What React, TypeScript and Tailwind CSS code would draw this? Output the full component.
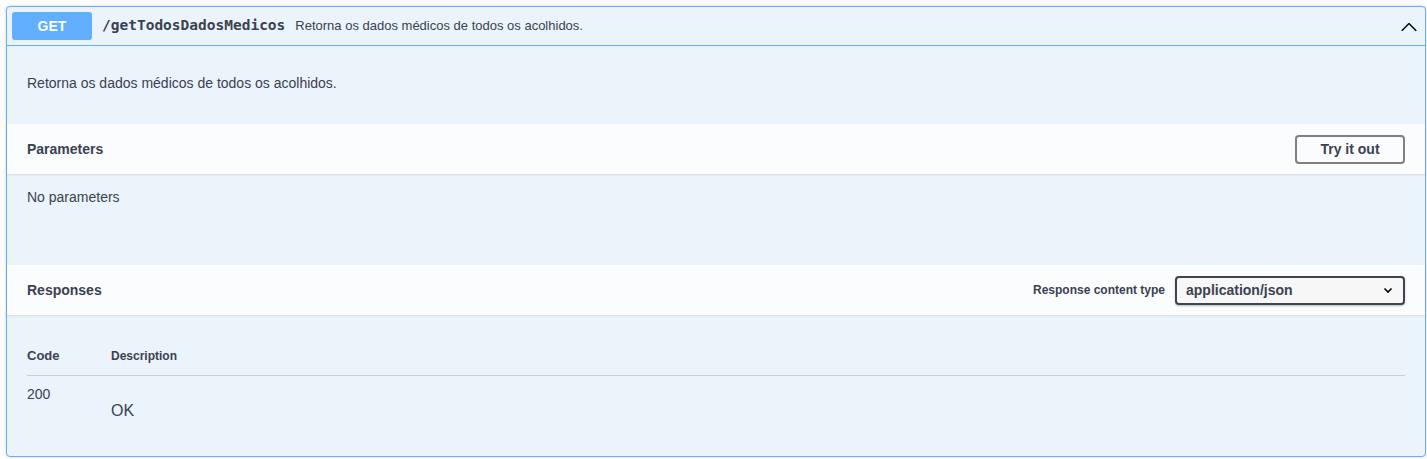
export default function App() {
  return (
    <div className="min-h-screen bg-white pt-[6px] pr-[1px] pb-[2px] pl-[6px] font-['Liberation_Sans',Arial,sans-serif] text-[#3b4151]">
      <div className="rounded-[4px] border border-[#61affe] bg-[#ebf3fb] shadow-[0_0_3px_rgba(0,0,0,0.19)]">
        {/* Summary */}
        <div className="flex items-center border-b border-[#61affe] p-[5px]">
          <span className="flex h-[28px] min-w-[80px] items-center justify-center rounded-[3px] bg-[#61affe] px-[15px] text-[14px] font-bold text-white">
            GET
          </span>
          <span className="px-[10px] font-['DejaVu_Sans_Mono',monospace] text-[14.5px] font-bold">
            /getTodosDadosMedicos
          </span>
          <span className="text-[13px]">Retorna os dados médicos de todos os acolhidos.</span>
          <div className="ml-auto pr-[1px]">
            <svg width="20" height="20" viewBox="0 0 20 20" fill="#000">
              <path d="M17.418 14.908c-.271.268-.707.268-.979 0L10 8.57l-6.44 6.337c-.27.268-.707.268-.979 0-.27-.267-.27-.701 0-.969l6.93-6.818c.27-.268.707-.268.978 0l6.93 6.818c.27.268.27.702 0 .97z" />
            </svg>
          </div>
        </div>

        {/* Description */}
        <div className="px-[20px] pt-[29px] pb-[33px] text-[14px] leading-[16px]">
          Retorna os dados médicos de todos os acolhidos.
        </div>

        {/* Parameters */}
        <div className="flex h-[50px] items-center bg-[#fafcfe] px-[20px] shadow-[0_1px_2px_rgba(0,0,0,0.1)]">
          <h4 className="text-[14px] font-bold">Parameters</h4>
          <button className="ml-auto h-[29px] w-[110px] rounded-[4px] border-2 border-[#808080] bg-transparent text-[14px] font-bold">
            Try it out
          </button>
        </div>
        <div className="h-[91px] px-[20px] pt-[15px] text-[14px] leading-[16px]">No parameters</div>

        {/* Responses */}
        <div className="flex h-[50px] items-center bg-[#fafcfe] px-[20px] shadow-[0_1px_2px_rgba(0,0,0,0.1)]">
          <h4 className="text-[14px] font-bold">Responses</h4>
          <div className="ml-auto flex items-center gap-[10px]">
            <span className="text-[12px] font-bold">Response content type</span>
            <div className="flex h-[29px] w-[230px] items-center justify-between rounded-[4px] border-2 border-[#41444e] bg-[#f7f7f7] px-[9px] shadow-[0_1px_2px_rgba(0,0,0,0.25)]">
              <span className="text-[14px] font-bold">application/json</span>
              <svg width="12" height="12" viewBox="0 0 12 12" fill="none" stroke="#000" strokeWidth="1.6">
                <polyline points="2.5,4.5 6,8 9.5,4.5" />
              </svg>
            </div>
          </div>
        </div>

        <div className="px-[20px] pt-[33px] pb-[37px]">
          <div className="flex border-b border-[rgba(59,65,81,0.2)] pb-[11px]">
            <span className="w-[84px] text-[13px] font-bold leading-[16px]">Code</span>
            <span className="text-[12px] font-bold leading-[16px]">Description</span>
          </div>
          <div className="flex pt-[10px]">
            <span className="w-[84px] text-[14px] leading-[16px]">200</span>
            <span className="mt-[17px] text-[16px] leading-[16px]">OK</span>
          </div>
        </div>
      </div>
    </div>
  );
}
